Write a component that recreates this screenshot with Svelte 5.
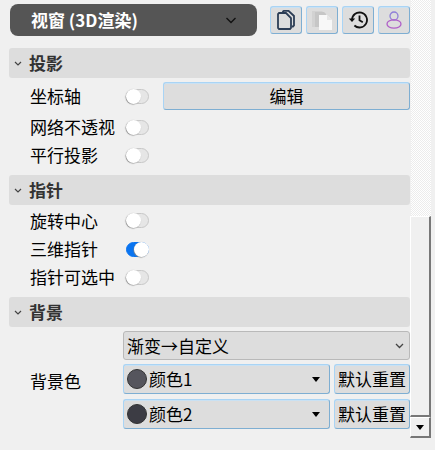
<script>
	let sections = [
		{ title: '投影', rows: [
			{ label: '坐标轴', on: false, action: '编辑' },
			{ label: '网络不透视', on: false },
			{ label: '平行投影', on: false }
		] },
		{ title: '指针', rows: [
			{ label: '旋转中心', on: false },
			{ label: '三维指针', on: true },
			{ label: '指针可选中', on: false }
		] }
	];
</script>

{#snippet chevron()}
	<svg class="chev" width="8" height="5" viewBox="0 0 8 5"><path d="M1 1l3 3 3-3" fill="none" stroke="#444" stroke-width="1.2"/></svg>
{/snippet}

<div class="window">
	<div class="panel">
		<div class="top">
			<div class="mode">
				<span>视窗 (3D渲染)</span>
				<svg width="12" height="7" viewBox="0 0 12 7"><path d="M1.5 1l4.5 4.500L10.500 1" fill="none" stroke="#111" stroke-width="1.400"/></svg>
			</div>
			<div class="tools">
				<button class="tool" aria-label="复制">
					<svg width="18" height="20" viewBox="0 0 18 20" fill="none" stroke="#2c3d55" stroke-width="1.800"><path d="M6 2.500V1.500L7 .8h4.500L17 6v9.500L16 16.500h-1"/><path d="M2 3h7l5 5v10l-1 1H2l-1-1V4z"/></svg>
				</button>
				<button class="tool" aria-label="粘贴">
					<svg width="20" height="20" viewBox="0 0 20 20"><path d="M0 1h10l2 2v14H0z" fill="#d2d2d2"/><path d="M3 2h9l2 2v13H3z" fill="#c6c6c6"/><path d="M7 5h8l5 5v10H7z" fill="#f8f8f8"/><path d="M15 5v5h5z" fill="#e6e6e6"/></svg>
				</button>
				<button class="tool" aria-label="历史">
					<svg width="20" height="18" viewBox="0 0 20 18" fill="none" stroke="#111" stroke-width="1.800"><path d="M4 9a7.500 7.500 0 1 1 2.400 5.500"/><path d="M.8 7.500L4 11l3.200-3.500z" fill="#111" stroke="none"/><path d="M11.500 4.500v4.800l3.300 2"/></svg>
				</button>
				<button class="tool" aria-label="用户">
					<svg width="16" height="18" viewBox="0 0 16 18" fill="none" stroke-width="1.300"><circle cx="8" cy="5" r="4" stroke="#8f7fd8"/><ellipse cx="8" cy="13" rx="7" ry="4.200" stroke="#b060c8"/></svg>
				</button>
			</div>
		</div>

		{#each sections as s}
			<div class="head">{@render chevron()}<span>{s.title}</span></div>
			<div class="rows">
				{#each s.rows as r}
					<div class="row" class:has-action={r.action}>
						<span class="label">{r.label}</span>
						<span class="switch" class:on={r.on}><i></i></span>
						{#if r.action}<button class="btn wide">{r.action}</button>{/if}
					</div>
				{/each}
			</div>
		{/each}

		<div class="head">{@render chevron()}<span>背景</span></div>
		<div class="bg">
			<span class="label bg-label">背景色</span>
			<div class="bg-controls">
				<div class="select">
					<span>渐变→自定义</span>
					<svg width="9" height="6" viewBox="0 0 9 6"><path d="M1 1l3.500 3.500L8 1" fill="none" stroke="#444" stroke-width="1.300"/></svg>
				</div>
				<div class="color-row">
					<div class="btn color"><i class="dot one"></i><span>颜色1</span><b></b></div>
					<button class="btn reset">默认重置</button>
				</div>
				<div class="color-row">
					<div class="btn color"><i class="dot two"></i><span>颜色2</span><b></b></div>
					<button class="btn reset">默认重置</button>
				</div>
			</div>
		</div>
	</div>

	<div class="scrollbar">
		<div class="track"></div>
		<div class="thumb"></div>
		<div class="arrow"><b></b></div>
	</div>
</div>

<style>
	:global(body) {
		margin: 0;
		background: #f0f0f0;
	}

	.window {
		width: 435px;
		height: 450px;
		display: flex;
		overflow: hidden;
		background: #f0f0f0;
		color: #000;
		font-family: "Noto Sans CJK SC", "Noto Sans", sans-serif;
		font-size: 17px;
		line-height: 24px;
	}

	.panel {
		width: 401px;
		margin-left: 9px;
		flex: none;
	}

	.top {
		display: flex;
		align-items: center;
		justify-content: space-between;
		height: 32px;
		margin-top: 4px;
		margin-bottom: 12px;
	}

	.mode {
		width: 247px;
		margin-left: 1px;
		height: 32px;
		box-sizing: border-box;
		padding: 0 20px 0 21px;
		display: flex;
		align-items: center;
		justify-content: space-between;
		background: #555;
		border-radius: 8px;
		color: #fff;
		font-weight: 700;
	}

	.tools {
		display: flex;
		gap: 4px;
	}

	.tool,
	.btn {
		box-sizing: border-box;
		background: #dddddd;
		border: 1px solid #a9d4f5;
		border-bottom-color: #7eaed2;
		border-right-color: #7eaed2;
		border-radius: 3px;
		box-shadow: inset 0 1px #c9e1f3;
		padding: 0;
		font: inherit;
		color: inherit;
	}

	.tool {
		width: 32px;
		height: 28px;
		display: flex;
		align-items: center;
		justify-content: center;
	}

	.head {
		height: 30px;
		display: flex;
		align-items: center;
		background: #dddddd;
		border-radius: 3px;
		font-weight: 700;
		color: #333;
	}

	.chev {
		margin: 0 7px 0 5px;
	}

	.rows {
		padding: 1px 0 6px;
	}

	.row {
		height: 28px;
		display: flex;
		align-items: center;
		padding-left: 21px;
	}

	.row:first-child {
		height: 29px;
	}

	.row.has-action {
		height: 28px;
		margin: 3px 0;
	}

	.label {
		width: 96px;
		flex: none;
		white-space: nowrap;
	}

	.switch {
		width: 23px;
		height: 15px;
		box-sizing: border-box;
		border: 1px solid #c8c8c8;
		border-radius: 8px;
		background: #e6e6e6;
		position: relative;
		flex: none;
	}

	.switch i {
		position: absolute;
		left: -1px;
		top: -1px;
		width: 15px;
		height: 15px;
		border-radius: 50%;
		background: #fff;
		box-shadow: -0.5px 0.5px 1px #888;
	}

	.switch.on {
		background: #0a74f0;
		border-color: #0a74f0;
	}

	.switch.on i {
		left: auto;
		right: -1px;
	}

	.wide {
		margin-left: 14px;
		flex: 1;
		height: 28px;
	}

	.bg {
		display: flex;
		align-items: center;
		padding: 4px 0 0 21px;
	}

	.bg-label {
		width: 93px;
		margin-top: 2px;
	}

	.bg-controls {
		flex: 1;
		display: flex;
		flex-direction: column;
		gap: 4px;
	}

	.select {
		box-sizing: border-box;
		height: 29px;
		display: flex;
		align-items: center;
		justify-content: space-between;
		padding: 0 5px 0 3px;
		background: #dddddd;
		border: 1px solid #b9b9b9;
		border-radius: 3px;
	}

	.color-row {
		display: flex;
		gap: 4px;
		height: 30px;
	}

	.color-row:last-child {
		margin-top: 1px;
	}

	.color {
		width: 207px;
		display: flex;
		align-items: center;
		padding: 0 9px 0 3px;
	}

	.color span {
		flex: 1;
	}

	.color b {
		border: 4.500px solid transparent;
		border-top: 5px solid #000;
		border-bottom: 0;
	}

	.dot {
		width: 20px;
		height: 20px;
		border-radius: 50%;
		margin-right: 2px;
		border: 1px solid #333;
		box-sizing: border-box;
	}

	.dot.one {
		background: #55555d;
	}

	.dot.two {
		background: #3c3c44;
	}

	.reset {
		width: 76px;
		white-space: nowrap;
		padding: 0;
	}

	.scrollbar {
		width: 21px;
		height: 450px;
		flex: none;
		display: flex;
		flex-direction: column;
	}

	.track {
		height: 216px;
		margin-left: 1px;
		background: repeating-conic-gradient(#ececec 0 25%, #fff 0 50%) 0 0 / 2px 2px;
	}

	.thumb {
		height: 201px;
		box-sizing: border-box;
		background: #f0f0f0;
		border: 1px solid #fff;
		border-right: 2px solid #777;
		border-bottom: 2px solid #777;
	}

	.arrow {
		height: 21px;
		width: 21px;
		box-sizing: border-box;
		background: #f0f0f0;
		border-top: 1px solid #fff;
		border-left: 1px solid #fff;
		border-right: 2px solid #777;
		border-bottom: 2px solid #777;
		display: flex;
		align-items: center;
		justify-content: center;
	}

	.arrow b {
		border: 4.500px solid transparent;
		border-top: 5px solid #000;
		border-bottom: 0;
	}
</style>
